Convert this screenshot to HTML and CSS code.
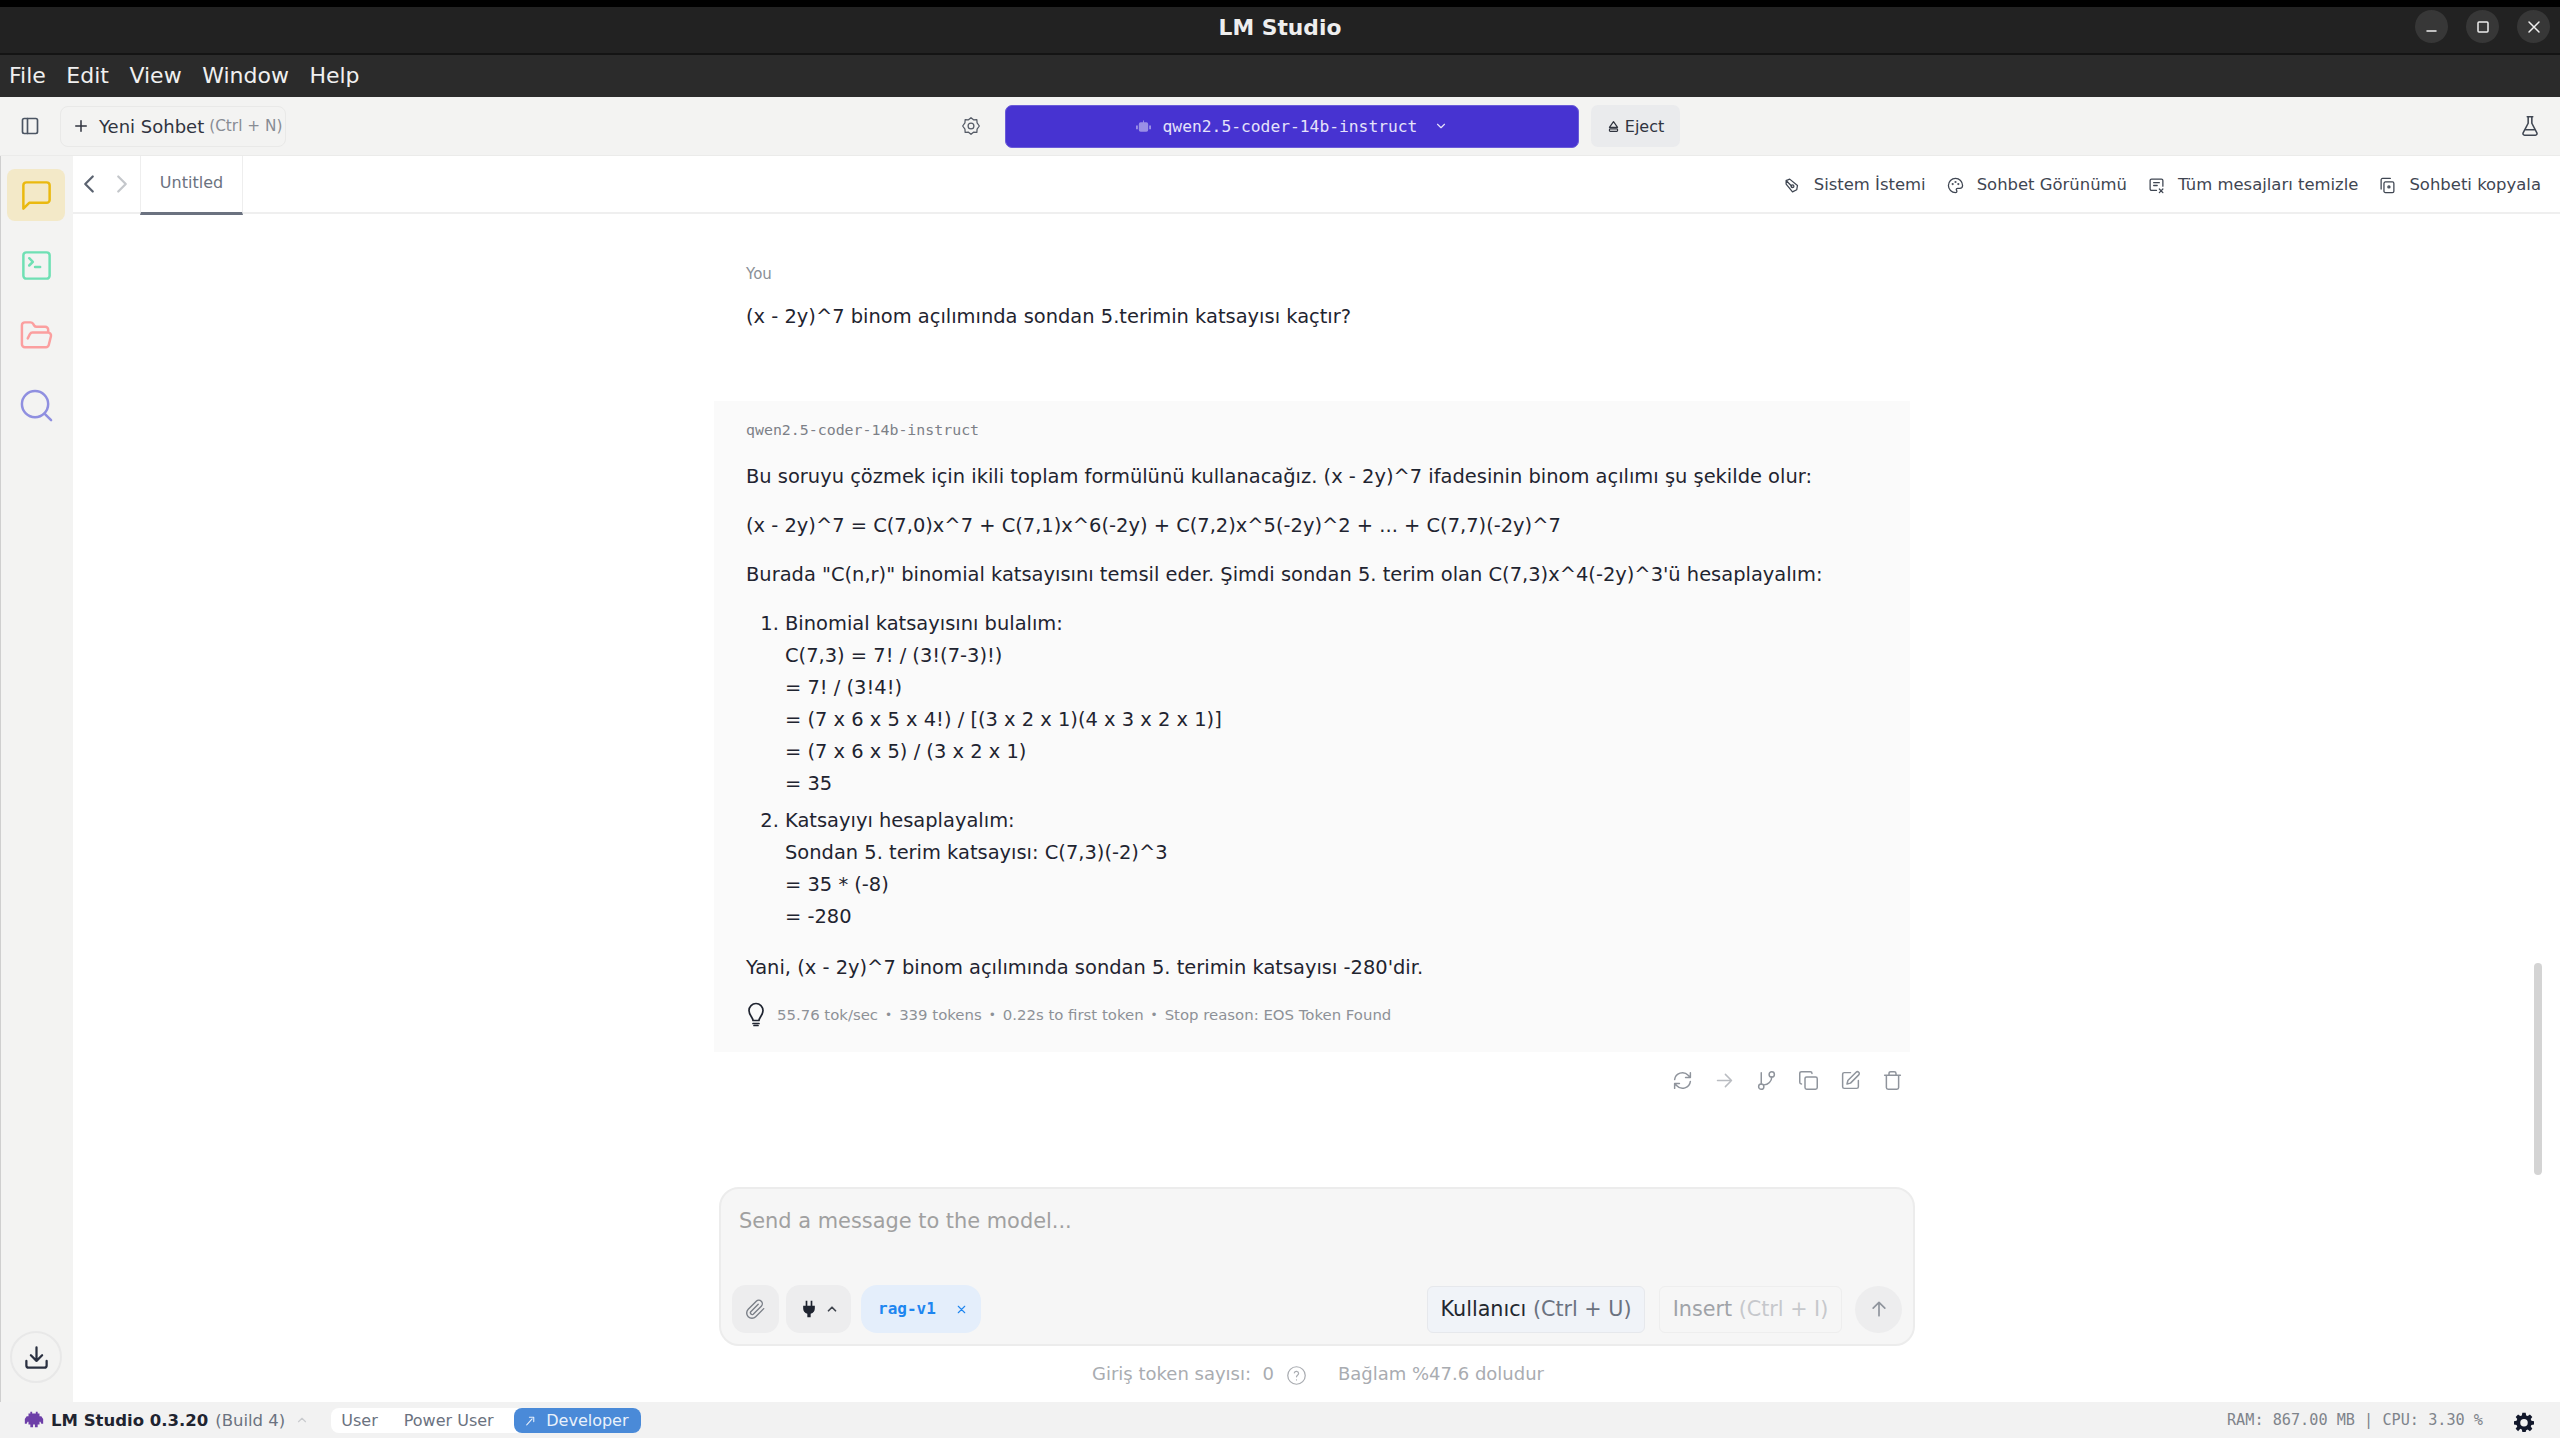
FILE: index.html
```html
<!DOCTYPE html>
<html lang="tr">
<head>
  <meta charset="UTF-8">
  <title>LM Studio</title>
  <link rel="stylesheet" href="styles.css">
</head>
<body>
  <header class="titlebar">
    <div class="title">LM Studio</div>
    <div class="win-controls">
      <button class="win-btn"><svg viewBox="0 0 16 16"><path d="M3 12h9"/></svg></button>
      <button class="win-btn"><svg viewBox="0 0 16 16"><rect x="3" y="3" width="10" height="10" rx="1"/></svg></button>
      <button class="win-btn"><svg viewBox="0 0 16 16"><path d="M3 3l10 10M13 3L3 13"/></svg></button>
    </div>
  </header>

  <nav class="menubar">
    <span>File</span><span>Edit</span><span>View</span><span>Window</span><span>Help</span>
  </nav>

  <div class="toolbar">
    <svg class="icon panel-icon" viewBox="0 0 24 24"><rect x="3" y="3" width="18" height="18" rx="2"/><path d="M9 3v18"/></svg>
    <button class="new-chat">
      <svg class="icon plus" viewBox="0 0 24 24"><path d="M5 12h14M12 5v14"/></svg>
      <span>Yeni Sohbet</span> <small>(Ctrl + N)</small>
    </button>
    <svg class="icon model-gear" viewBox="0 0 24 24"><path d="M12 2l3 2.6 4-.3.3 4L22 12l-2.700 3.700-.3 4-4-.3L12 22l-3-2.600-4 .3-.3-4L2 12l2.700-3.700.3-4 4 .3z"/><circle cx="12" cy="12" r="3.500"/></svg>
    <button class="model-pill">
      <svg class="model-icon" viewBox="0 0 16 12"><path d="M7.500 0h1v2H11a2 2 0 0 1 2 2v6a2 2 0 0 1-2 2H5a2 2 0 0 1-2-2V4a2 2 0 0 1 2-2h2.500zM0 5.500h2v4H0zM14 5.500h2v4h-2z"/></svg>
      <span>qwen2.5-coder-14b-instruct</span>
      <svg class="pill-chevron" viewBox="0 0 24 24"><path d="M6 9l6 6 6-6"/></svg>
    </button>
    <button class="eject">
      <svg class="eject-icon" viewBox="0 0 16 16"><path d="M8 2l5 7H3z"/><rect x="3" y="11" width="10" height="3" rx="1"/></svg>
      Eject
    </button>
    <svg class="icon flask" viewBox="0 0 24 24"><path d="M9 2h6M10 2v7L4.500 19.500A1.700 1.700 0 0 0 6 22h12a1.700 1.700 0 0 0 1.500-2.500L14 9V2M7 16h10"/></svg>
  </div>

  <div class="workspace">
    <aside class="sidebar">
      <button class="side-btn active">
        <svg viewBox="0 0 24 24" class="stroke-chat"><path d="M21 15a2 2 0 0 1-2 2H7l-4 4V5a2 2 0 0 1 2-2h14a2 2 0 0 1 2 2z"/></svg>
      </button>
      <button class="side-btn">
        <svg viewBox="0 0 24 24" class="stroke-term"><rect x="3" y="3" width="18" height="18" rx="2"/><path d="M7 7l2.500 2.500L7 12M11 13h3.500"/></svg>
      </button>
      <button class="side-btn">
        <svg viewBox="0 0 24 24" class="stroke-folder"><path d="M6 14l1.500-3A2 2 0 0 1 9.200 10H20a2 2 0 0 1 1.900 2.500l-1.500 6A2 2 0 0 1 18.400 20H4a2 2 0 0 1-2-2V5a2 2 0 0 1 2-2h3.900a2 2 0 0 1 1.700.9l.8 1.200a2 2 0 0 0 1.700.9H18a2 2 0 0 1 2 2v2"/></svg>
      </button>
      <button class="side-btn">
        <svg viewBox="0 0 24 24" class="stroke-search"><circle cx="11" cy="11" r="9"/><path d="M22 22l-4.500-4.500"/></svg>
      </button>
      <button class="download-btn">
        <svg viewBox="0 0 24 24"><path d="M3 15v4a2 2 0 0 0 2 2h14a2 2 0 0 0 2-2v-4M7 10l5 5 5-5M12 15V3"/></svg>
      </button>
    </aside>

    <main class="main">
      <div class="tabbar">
        <div class="tab-nav">
          <svg class="nav-back" viewBox="0 0 24 24"><path d="M15 18l-6-6 6-6"/></svg>
          <svg class="nav-next" viewBox="0 0 24 24"><path d="M9 18l6-6-6-6"/></svg>
        </div>
        <div class="tab">Untitled</div>
        <div class="tab-actions">
          <span class="tab-action">
            <svg viewBox="0 0 24 24"><path d="M3 5l5-2 11 9-1 6-6 3-9-11zM3 5l8 8"/><circle cx="12" cy="13" r="2"/></svg>
            Sistem İstemi
          </span>
          <span class="tab-action">
            <svg viewBox="0 0 24 24"><path d="M12 2a10 10 0 1 0 0 20c1.500 0 2-1 2-2s-1-1.500-1-2.500 1-1.500 2-1.500h3c2 0 4-1.500 4-4 0-5.500-4.500-10-10-10z"/><circle cx="8" cy="10" r=".6"/><circle cx="12" cy="7" r=".6"/><circle cx="16" cy="10" r=".6"/></svg>
            Sohbet Görünümü
          </span>
          <span class="tab-action">
            <svg viewBox="0 0 24 24"><path d="M12 19H5a2 2 0 0 1-2-2V5a2 2 0 0 1 2-2h14a2 2 0 0 1 2 2v8M8 8h8M8 12h5M16 17l5 5M21 17l-5 5"/></svg>
            Tüm mesajları temizle
          </span>
          <span class="tab-action">
            <svg viewBox="0 0 24 24"><rect x="7" y="7" width="14" height="15" rx="2"/><path d="M3 17V4a2 2 0 0 1 2-2h11"/><circle cx="14" cy="14" r="1.500"/></svg>
            Sohbeti kopyala
          </span>
        </div>
      </div>

      <div class="chat">
        <section class="msg-user">
          <div class="sender">You</div>
          <p>(x - 2y)^7 binom açılımında sondan 5.terimin katsayısı kaçtır?</p>
        </section>

        <section class="msg-bot">
          <div class="sender-model">qwen2.5-coder-14b-instruct</div>
          <p>Bu soruyu çözmek için ikili toplam formülünü kullanacağız. (x - 2y)^7 ifadesinin binom açılımı şu şekilde olur:</p>
          <p>(x - 2y)^7 = C(7,0)x^7 + C(7,1)x^6(-2y) + C(7,2)x^5(-2y)^2 + ... + C(7,7)(-2y)^7</p>
          <p>Burada "C(n,r)" binomial katsayısını temsil eder. Şimdi sondan 5. terim olan C(7,3)x^4(-2y)^3'ü hesaplayalım:</p>
          <ol>
            <li>Binomial katsayısını bulalım:<br>C(7,3) = 7! / (3!(7-3)!)<br>= 7! / (3!4!)<br>= (7 x 6 x 5 x 4!) / [(3 x 2 x 1)(4 x 3 x 2 x 1)]<br>= (7 x 6 x 5) / (3 x 2 x 1)<br>= 35</li>
            <li>Katsayıyı hesaplayalım:<br>Sondan 5. terim katsayısı: C(7,3)(-2)^3<br>= 35 * (-8)<br>= -280</li>
          </ol>
          <p>Yani, (x - 2y)^7 binom açılımında sondan 5. terimin katsayısı -280'dir.</p>
          <div class="stats">
            <svg class="bulb" viewBox="0 0 24 24"><path d="M9 18c0-3-4-5-4-10a7 7 0 0 1 14 0c0 5-4 7-4 10zM9 21h6M10 23h4"/></svg>
            <span>55.76 tok/sec</span><i>•</i><span>339 tokens</span><i>•</i><span>0.22s to first token</span><i>•</i><span>Stop reason: EOS Token Found</span>
          </div>
        </section>

        <div class="msg-actions">
          <svg viewBox="0 0 24 24"><path d="M3 11a9 9 0 0 1 15.500-5L21 8.500M21 3v5.500h-5.500M21 13a9 9 0 0 1-15.500 5L3 15.500M3 21v-5.500h5.500"/></svg>
          <svg class="faint" viewBox="0 0 24 24"><path d="M4 12h16M13 5l7 7-7 7"/></svg>
          <svg viewBox="0 0 24 24"><circle cx="6" cy="19" r="3"/><circle cx="18" cy="5" r="3"/><path d="M6 16V3M18 8a9 9 0 0 1-9 9"/></svg>
          <svg viewBox="0 0 24 24"><rect x="8" y="8" width="14" height="14" rx="2"/><path d="M4 16a2 2 0 0 1-2-2V4a2 2 0 0 1 2-2h10a2 2 0 0 1 2 2"/></svg>
          <svg viewBox="0 0 24 24"><path d="M12 3H5a2 2 0 0 0-2 2v14a2 2 0 0 0 2 2h14a2 2 0 0 0 2-2v-7M18.400 2.600a2.100 2.100 0 0 1 3 3L12 15l-4 1 1-4z"/></svg>
          <svg viewBox="0 0 24 24"><path d="M3 6h18M19 6v14a2 2 0 0 1-2 2H7a2 2 0 0 1-2-2V6M8 6V4a2 2 0 0 1 2-2h4a2 2 0 0 1 2 2v2"/></svg>
        </div>
        <div class="scroll-thumb"></div>
      </div>

      <div class="composer">
        <div class="placeholder">Send a message to the model...</div>
        <div class="composer-row">
          <button class="tool-btn clip">
            <svg viewBox="0 0 24 24"><path d="M21.400 11l-9.200 9.200a6 6 0 0 1-8.500-8.500l9.200-9.200a4 4 0 0 1 5.700 5.700l-9.200 9.200a2 2 0 0 1-2.800-2.800l8.500-8.500"/></svg>
          </button>
          <button class="tool-btn plug">
            <svg class="plug-icon" viewBox="0 0 24 24"><path d="M8 2v6h-3v3a7 7 0 0 0 5 6.700V22h4v-4.300A7 7 0 0 0 19 11V8h-3V2h-2v6h-4V2z"/></svg>
            <svg class="plug-caret" viewBox="0 0 24 24"><path d="M6 15l6-6 6 6"/></svg>
          </button>
          <div class="chip"><span>rag-v1</span><svg viewBox="0 0 24 24"><path d="M6 6l12 12M18 6L6 18"/></svg></div>
          <div class="spacer"></div>
          <button class="role-btn">Kullanıcı <small>(Ctrl + U)</small></button>
          <button class="insert-btn">Insert <small>(Ctrl + I)</small></button>
          <button class="send-btn"><svg viewBox="0 0 24 24"><path d="M12 20V4M5 11l7-7 7 7"/></svg></button>
        </div>
      </div>

      <div class="composer-foot">
        <span class="token-count">Giriş token sayısı:&nbsp; 0</span>
        <svg class="help" viewBox="0 0 24 24"><circle cx="12" cy="12" r="10"/><path d="M9.500 9a2.500 2.500 0 0 1 4.900.8c0 1.700-2.400 2-2.400 3.700M12 17h.01"/></svg>
        <span>Bağlam %47.6 doludur</span>
      </div>
    </main>
  </div>

  <footer class="statusbar">
    <svg class="logo" viewBox="0 0 24 24"><path d="M8 3h2v2h4V3h2v2h2v3h2l2 3v5h-2l-1-2h-1v3h-2v3h-3v-3h-2v3H8v-3H6v-3H5l-1 2H2v-5l2-3h2V5h2z"/></svg>
    <strong>LM Studio 0.3.20</strong>
    <span class="build">(Build 4)</span>
    <svg class="status-caret" viewBox="0 0 24 24"><path d="M6 15l6-6 6 6"/></svg>
    <div class="mode-switch">
      <span class="mode">User</span>
      <span class="mode">Power User</span>
      <span class="mode dev">
        <svg viewBox="0 0 24 24"><path d="M5 20L15 9M10 6h8v8"/></svg>
        Developer
      </span>
    </div>
    <div class="spacer"></div>
    <span class="sysinfo">RAM: 867.00 MB | CPU: 3.30 %</span>
    <svg class="status-gear" viewBox="0 0 24 24"><path fill-rule="evenodd" d="M10 1h4l.6 3.100 1.900.8L19.100 3 22 5.900l-1.900 2.600.8 1.900L24 11v4l-3.100.6-.8 1.900 1.900 2.600L19.100 23l-2.600-1.900-1.900.8L14 24h-4l-.6-3.100-1.900-.8L4.900 23 2 20.100l1.900-2.600-.8-1.900L0 15v-4l3.100-.6.8-1.900L2 5.900 4.900 3l2.600 1.900 1.900-.8zM12 8.500a4.500 4.500 0 1 0 0 9 4.500 4.500 0 0 0 0-9z"/></svg>
  </footer>
</body>
</html>
```

FILE: styles.css
```css
* { box-sizing: border-box; margin: 0; padding: 0; }
html, body { height: 100%; }
body {
  font-family: 'DejaVu Sans', Verdana, sans-serif;
  display: flex;
  flex-direction: column;
  height: 100vh;
  overflow: hidden;
  background: #fff;
  color: #1f2430;
}
button { font-family: inherit; border: none; background: none; color: inherit; }
svg { fill: none; stroke: currentColor; stroke-width: 2; stroke-linecap: round; stroke-linejoin: round; flex: none; }
.icon { width: 20px; height: 20px; color: #4b5563; }
.spacer { flex: 1; }

.titlebar {
  height: 55px;
  border-top: 7px solid #000;
  border-bottom: 2px solid #141414;
  background: #222;
  display: flex;
  align-items: center;
  justify-content: center;
  position: relative;
  flex: none;
}
.title { color: #eee; font-size: 21.800px; font-weight: bold; margin-top: -5px; }
.win-controls {
  position: absolute;
  right: 10px;
  top: 3px;
  display: flex;
  gap: 18px;
}
.win-btn {
  width: 33px;
  height: 33px;
  border-radius: 50%;
  background: #373737;
  color: #eee;
  display: flex;
  align-items: center;
  justify-content: center;
}
.win-btn svg { width: 16px; height: 16px; stroke-width: 1.5; }

.menubar {
  height: 42px;
  background: #2b2b2b;
  color: #f0f0f0;
  display: flex;
  align-items: center;
  gap: 20.500px;
  padding: 0 8px 2px 9px;
  font-size: 22px;
  flex: none;
}

.toolbar {
  height: 59px;
  background: #f3f3f2;
  border-bottom: 1px solid #ebebea;
  display: flex;
  align-items: center;
  flex: none;
}
.panel-icon { margin-left: 20px; }
.new-chat {
  margin-left: 20px;
  width: 226px;
  height: 41px;
  border: 1px solid #e9e9e8;
  border-radius: 8px;
  display: flex;
  align-items: center;
  font-size: 18px;
  color: #30343f;
  padding-left: 11px;
  gap: 5px;
  white-space: nowrap;
}
.new-chat small { font-size: 15.300px; color: #888c94; }
.plus { width: 18px; height: 18px; color: #30343f; margin-right: 4px; }
.model-gear { margin-left: 675px; color: #555b66; stroke-width: 1.5; }
.model-pill {
  margin-left: 24px;
  width: 574px;
  height: 43px;
  background: #4733d1;
  border: 1px solid #6a5bd8;
  border-radius: 7px;
  color: #e5e2fa;
  font-family: 'DejaVu Sans Mono', monospace;
  font-size: 16.300px;
  display: flex;
  align-items: center;
  justify-content: center;
  gap: 12px;
}
.model-icon { width: 15px; height: 12px; fill: #9a8fe6; stroke: none; }
.pill-chevron { width: 14px; height: 14px; margin-left: 5px; }
.eject {
  margin-left: 12px;
  width: 89px;
  height: 42px;
  background: #eaebed;
  border-radius: 7px;
  font-size: 16px;
  color: #30343f;
  display: flex;
  align-items: center;
  justify-content: center;
  gap: 5px;
}
.eject-icon { width: 13px; height: 13px; stroke-width: 1.5; }
.flask { margin-left: auto; margin-right: 19px; width: 22px; height: 24px; color: #3f4652; stroke-width: 1.7; }

.workspace { flex: 1; display: flex; min-height: 0; }
.sidebar {
  width: 73px;
  background: #f3f3f2;
  display: flex;
  flex-direction: column;
  align-items: center;
  padding-top: 13px;
  padding-right: 2px;
  gap: 18px;
  flex: none;
  border-left: 1px solid #cfcfcf;
}
.side-btn {
  width: 58px;
  height: 52px;
  border-radius: 8px;
  display: flex;
  align-items: center;
  justify-content: center;
}
.side-btn svg { width: 35px; height: 35px; stroke-width: 1.700; }
.side-btn.active { background: #f3e9c8; }
.stroke-chat { color: #eab90f; }
.stroke-term { color: #6fe0b4; }
.stroke-folder { color: #fb9f9f; }
.stroke-search { color: #8f8fe0; }
.download-btn {
  margin-top: auto;
  margin-bottom: 19px;
  width: 52px;
  height: 52px;
  border: 2px solid #e8e8e8;
  border-radius: 50%;
  display: flex;
  align-items: center;
  justify-content: center;
  color: #2a3040;
}
.download-btn svg { width: 27px; height: 27px; }

.main { flex: 1; min-width: 0; display: flex; flex-direction: column; position: relative; }
.tabbar {
  height: 58px;
  border-bottom: 2px solid #efefef;
  display: flex;
  flex: none;
}
.tab-nav { width: 67px; display: flex; align-items: center; padding-left: 1px; gap: 3px; }
.nav-back { color: #5b6370; width: 30px; height: 30px; stroke-width: 1.800; }
.nav-next { color: #c4c7cb; width: 30px; height: 30px; stroke-width: 1.800; }
.tab {
  width: 103px;
  height: 59px;
  border-left: 1px solid #eeeeee;
  border-right: 1px solid #eeeeee;
  border-bottom: 3px solid #6b7280;
  font-size: 16px;
  color: #6b7280;
  text-align: center;
  padding-top: 17px;
  background: #fff;
}
.tab-actions {
  margin-left: auto;
  display: flex;
  align-items: center;
  gap: 21px;
  padding-right: 19px;
}
.tab-action {
  display: flex;
  align-items: center;
  gap: 13px;
  font-size: 16.450px;
  color: #3f4652;
}
.tab-action svg { width: 17px; height: 17px; stroke-width: 1.8; margin-top: 2px; }

.chat { flex: 1; min-height: 0; position: relative; padding-top: 50px; }
.msg-user, .msg-bot { margin-left: 641px; width: 1196px; padding: 0 32px; }
.sender { font-size: 15px; color: #8a8f96; line-height: 20px; margin-bottom: 17px; }
.msg-user { height: 137px; }
.msg-user p, .msg-bot p, .msg-bot ol { font-size: 19.450px; line-height: 32px; color: #1f2430; }
.msg-bot { background: #fafafa; height: 651px; padding-top: 18px; }
.sender-model {
  font-family: 'DejaVu Sans Mono', monospace;
  font-size: 14.900px;
  color: #7c8087;
  line-height: 22px;
  margin-bottom: 20px;
}
.msg-bot p { margin-bottom: 17px; }
.msg-bot ol { padding-left: 39px; margin-bottom: 19px; }
.msg-bot li { margin-bottom: 5px; }
.msg-bot li:last-child { margin-bottom: 0; }
.stats {
  display: flex;
  align-items: center;
  font-size: 14.900px;
  color: #8d9197;
  margin-top: 16px;
}
.stats i { font-style: normal; margin: 0 7px; font-size: 12px; }
.bulb { width: 24px; height: 27px; color: #1f2430; margin-right: 9px; stroke-width: 1.700; margin-left: -2px; }
.msg-actions {
  margin-left: 1599px;
  margin-top: 18px;
  display: flex;
  gap: 21px;
  color: #8f949c;
}
.msg-actions svg { width: 21px; height: 21px; stroke-width: 1.700; }
.msg-actions .faint { color: #b9bcc1; }
.scroll-thumb {
  position: absolute;
  right: 18px;
  top: 749px;
  width: 8px;
  height: 212px;
  background: #d4d4d4;
  border-radius: 4px;
}

.composer {
  margin-left: 646px;
  margin-bottom: 15px;
  width: 1196px;
  height: 159px;
  background: #f6f6f6;
  border: 2px solid #ececec;
  border-radius: 20px;
  display: flex;
  flex-direction: column;
  padding: 0 11px 11px 11px;
  flex: none;
}
.placeholder { font-size: 20.900px; color: #a0a0a0; padding: 20px 0 0 7px; }
.composer-row { margin-top: auto; display: flex; align-items: center; }
.tool-btn {
  height: 48px;
  border-radius: 14px;
  background: #ededee;
  display: flex;
  align-items: center;
  justify-content: center;
  color: #41464f;
}
.clip { width: 47px; }
.clip svg { width: 21px; height: 21px; stroke-width: 1.600; color: #7a7f87; }
.plug { width: 65px; margin-left: 7px; gap: 6px; }
.plug-icon { width: 20px; height: 22px; fill: #1f2430; stroke: none; }
.plug-caret { width: 14px; height: 14px; stroke-width: 3; }
.chip {
  margin-left: 10px;
  width: 120px;
  height: 48px;
  border-radius: 16px;
  background: #e4eefb;
  display: flex;
  align-items: center;
  padding-left: 17px;
  gap: 19px;
  color: #1e86f0;
  font-family: 'DejaVu Sans Mono', monospace;
  font-weight: bold;
  font-size: 16px;
}
.chip span { margin-top: -2px; }
.chip svg { width: 13px; height: 13px; }
.role-btn, .insert-btn {
  height: 47px;
  border-radius: 6px;
  font-size: 20.700px;
  white-space: nowrap;
}
.role-btn {
  width: 218px;
  background: #f0f3f8;
  border: 1px solid #e6e8ec;
  color: #23272f;
}
.role-btn small { font-size: inherit; color: #6b7280; }
.insert-btn {
  width: 183px;
  margin-left: 14px;
  border: 1px solid #eeeeee;
  color: #a0a3a8;
}
.insert-btn small { font-size: inherit; color: #c6c8cc; }
.send-btn {
  width: 47px;
  height: 47px;
  border-radius: 50%;
  background: #ededee;
  margin-left: 13px;
  color: #8f949c;
  display: flex;
  align-items: center;
  justify-content: center;
}
.send-btn svg { width: 20px; height: 20px; }

.composer-foot {
  height: 41px;
  flex: none;
  margin-left: 1019px;
  display: flex;
  align-items: flex-start;
  font-size: 18px;
  color: #a9acb1;
  padding-top: 2px;
}
.help { width: 21px; height: 21px; margin: 2px 31px 0 12px; stroke-width: 1.400; }

.statusbar {
  height: 36px;
  background: #f2f2f2;
  display: flex;
  align-items: center;
  flex: none;
  padding-left: 23px;
  font-size: 16.500px;
}
.logo { width: 22px; height: 22px; fill: #6d3fa8; stroke: none; }
.statusbar strong { margin-left: 6px; font-size: 16.500px; color: #1f2430; }
.build { margin-left: 7px; color: #6b7280; }
.status-caret { width: 14px; height: 14px; margin-left: 10px; color: #c9cbce; }
.mode-switch {
  margin-left: 22px;
  width: 310px;
  height: 25px;
  background: #fff;
  border-radius: 8px;
  display: flex;
  align-items: center;
  padding-left: 10px;
  color: #6b7280;
  font-size: 16px;
}
.mode:nth-child(2) { margin-left: 26px; }
.mode.dev {
  margin-left: auto;
  width: 127px;
  height: 25px;
  background: #4a8ad8;
  color: #e9f1fb;
  border-radius: 8px;
  display: flex;
  align-items: center;
  padding-left: 10px;
  gap: 9px;
}
.mode.dev svg { width: 13px; height: 13px; }
.sysinfo {
  font-family: 'DejaVu Sans Mono', monospace;
  font-size: 15.200px;
  color: #7f848b;
}
.status-gear { width: 20px; height: 20px; margin: 3px 26px 0 31px; fill: #12182b; stroke: none; }
```
